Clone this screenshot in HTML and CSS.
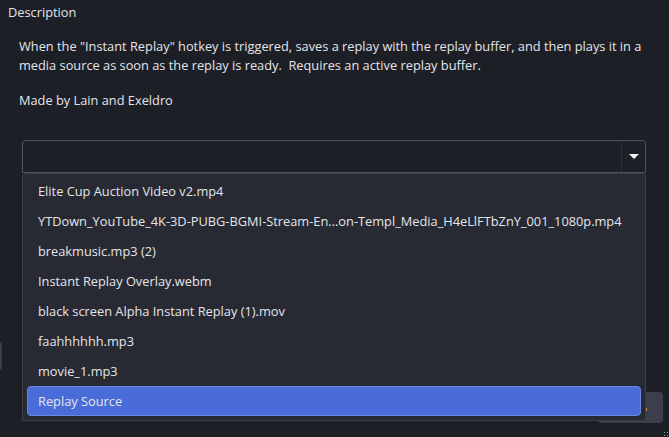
FILE: index.html
```html
<!DOCTYPE html>
<html lang="en">
<head>
    <meta charset="UTF-8">
    <title>Scripts</title>
    <link rel="stylesheet" href="styles.css">
</head>
<body>
    <div class="window">
        <div class="group-title">Description</div>
        <div class="group">
            <p>When the "Instant Replay" hotkey is triggered, saves a replay with the replay buffer, and then plays it in a media source as soon as the replay is ready.&nbsp; Requires an active replay buffer.</p>
            <p>Made by Lain and Exeldro</p>

            <div class="combo-wrap">
                <div class="combo">
                    <span class="combo-value"></span>
                    <span class="combo-arrow"></span>
                </div>

                <ul class="popup">
                    <li>Elite Cup Auction Video v2.mp4</li>
                    <li>YTDown_YouTube_4K-3D-PUBG-BGMI-Stream-En...on-Templ_Media_H4eLlFTbZnY_001_1080p.mp4</li>
                    <li>breakmusic.mp3 (2)</li>
                    <li>Instant Replay Overlay.webm</li>
                    <li>black screen Alpha Instant Replay (1).mov</li>
                    <li>faahhhhhh.mp3</li>
                    <li>movie_1.mp3</li>
                    <li class="selected">Replay Source</li>
                </ul>
            </div>
        </div>

        <!-- dialog buttons peeking out behind the popup -->
        <div class="side-button"></div>
        <div class="close-button"><span class="focus-mark"></span></div>
        <div class="size-grip"></div>
    </div>
</body>
</html>
```

FILE: styles.css
```css
html, body {
    margin: 0;
    height: 100%;
}

body {
    font-family: 'Open Sans', 'Noto Sans', sans-serif;
    font-size: 12.8px;
    background-color: #1d1f26;
    color: #e4e5ea;
    overflow: hidden;
}

.window {
    position: relative;
    height: 100%;
}

.group-title {
    padding: 3px 0 0 8px;
    height: 24px;
    line-height: 18px;
}

.group {
    padding: 0 0 0 19px;
}

.group p {
    margin: 0 0 16px;
    line-height: 19px;
}

.group p:first-child {
    padding-top: 10px;
}

.combo-wrap {
    position: relative;
    margin: 30px 0 0 3px;
    width: 624px;
}

.combo {
    display: flex;
    height: 31px;
    border: 1px solid #50535e;
    border-radius: 4px 4px 0 0;
    background-color: #1e2028;
}

.combo-value {
    flex: 1;
}

.combo-arrow {
    width: 23px;
    border-left: 1px solid #2c2f38;
    display: flex;
    align-items: center;
    justify-content: center;
}

.combo-arrow::before {
    content: "";
    border-left: 5px solid transparent;
    border-right: 5px solid transparent;
    border-top: 5px solid #f2f2f2;
}

.popup {
    position: absolute;
    left: 0;
    top: 33px;
    width: 614px;
    margin: 0;
    padding: 0 4px 4px;
    box-sizing: content-box;
    list-style: none;
    background-color: #272a33;
    border: 1px solid #3b3e49;
    border-radius: 4px 4px 0 0;
    z-index: 2;
}

.popup li {
    height: 30px;
    line-height: 30px;
    padding-left: 11px;
    white-space: nowrap;
}

.popup li:first-child {
    margin-top: 2px;
}

.popup .selected {
    height: 28px;
    line-height: 28px;
    background-color: #4a6cd8;
    border: 1px solid #6c87e2;
    border-radius: 4px;
    padding-left: 10px;
}

.side-button {
    position: absolute;
    left: -4px;
    top: 342px;
    width: 6px;
    height: 28px;
    background-color: #3c3f4b;
    border-radius: 3px;
}

.close-button {
    position: absolute;
    left: 598px;
    top: 392px;
    width: 65px;
    height: 31px;
    background-color: #3c3f4b;
    border-radius: 4px;
}

.focus-mark {
    position: absolute;
    left: 48px;
    top: 16px;
    width: 1px;
    height: 3px;
    background-color: #d98a3a;
}

.size-grip {
    position: absolute;
    right: 0;
    bottom: 0;
    width: 6px;
    height: 6px;
    background:
        radial-gradient(circle, #9a9ca4 0.9px, transparent 1px) 0 0 / 3px 3px;
}
```
